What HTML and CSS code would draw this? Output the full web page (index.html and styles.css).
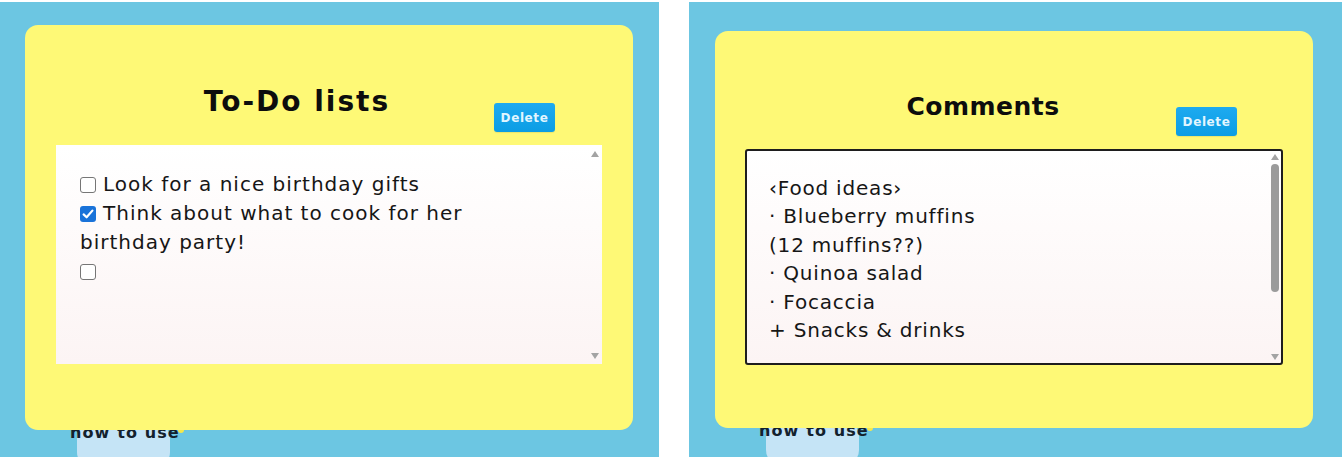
FILE: index.html
```html
<!DOCTYPE html>
<html lang="en">
<head>
<meta charset="utf-8">
<title>Notes</title>
<link rel="stylesheet" href="styles.css">
</head>
<body>
<div class="page">
  <section class="panel panel-left">
    <div class="card card-left">
      <div class="card-head">
        <h1 class="card-title">To-Do lists</h1>
        <button class="btn-delete" type="button">Delete</button>
      </div>
      <div class="note note-plain">
        <div class="note-body">
          <div class="todo"><span class="cb"></span><span class="todo-text">Look for a nice birthday gifts</span></div>
          <div class="todo"><span class="cb cb-on"><svg viewBox="0 0 16 16" width="16" height="16"><path d="M3.6 8.4 L6.6 11.3 L12.4 4.6" fill="none" stroke="#fff" stroke-width="2.2" stroke-linecap="round" stroke-linejoin="round"/></svg></span><span class="todo-text">Think about what to cook for her birthday party!</span></div>
          <div class="todo"><span class="cb"></span></div>
        </div>
        <div class="sbar">
          <span class="arr arr-up"></span>
          <span class="sbar-track"></span>
          <span class="arr arr-down"></span>
        </div>
      </div>
    </div>
    <div class="howto">
      <span class="howto-pill"></span>
      <span class="howto-text">how to use</span>
      <span class="howto-dot"></span>
    </div>
  </section>
  <section class="panel panel-right">
    <div class="card card-right">
      <div class="card-head">
        <h1 class="card-title">Comments</h1>
        <button class="btn-delete" type="button">Delete</button>
      </div>
      <div class="note note-bordered">
        <div class="note-body">
          <div class="line">&lsaquo;Food ideas&rsaquo;</div>
          <div class="line">&middot; Blueberry muffins</div>
          <div class="line">(12 muffins??)</div>
          <div class="line">&middot; Quinoa salad</div>
          <div class="line">&middot; Focaccia</div>
          <div class="line">+ Snacks &amp; drinks</div>
        </div>
        <div class="sbar">
          <span class="arr arr-up"></span>
          <span class="sbar-track"><span class="sbar-thumb"></span></span>
          <span class="arr arr-down"></span>
        </div>
      </div>
    </div>
    <div class="howto">
      <span class="howto-pill"></span>
      <span class="howto-text">how to use</span>
      <span class="howto-dot"></span>
    </div>
  </section>
</div>
</body>
</html>
```
FILE: styles.css
```css
* { box-sizing: border-box; }

html, body {
  margin: 0;
  padding: 0;
  background: #ffffff;
  height: 457px;
  overflow: hidden;
}

body {
  font-family: "Comic Sans MS", "DejaVu Sans", sans-serif;
  color: #111;
}

.page {
  display: flex;
  gap: 30px;
  padding-top: 2px;
  height: 457px;
}

.panel {
  background: #6cc6e2;
  height: 455px;
  overflow: hidden;
  display: flex;
  flex-direction: column;
}

.panel-left {
  width: 659px;
  padding: 23px 26px 0 25px;
}

.panel-right {
  width: 653px;
  padding: 29px 29px 0 26px;
}

.card {
  position: relative;
  z-index: 2;
  background: #fef976;
  border-radius: 13px;
  display: flex;
  flex-direction: column;
  flex: none;
}

.card-left { height: 405px; padding: 0 31px; }
.card-right { height: 397px; padding: 0 30px; }

.card-head {
  display: flex;
  align-items: flex-start;
}

.card-title {
  margin: 0;
  line-height: 36px;
  font-weight: bold;
  text-align: center;
  color: #0d0d0d;
}

.card-left .card-head { padding-top: 59px; margin-bottom: 13px; }
.card-left .card-title { width: 380px; margin-left: 51px; font-size: 28px; letter-spacing: 2px; }
.card-left .btn-delete { margin-left: 7px; margin-top: 19px; }

.card-right .card-head { padding-top: 58px; margin-bottom: 13px; }
.card-right .card-title { width: 380px; margin-left: 48px; font-size: 25px; letter-spacing: 0.5px; }
.card-right .btn-delete { margin-left: 3px; margin-top: 18px; }

.btn-delete {
  width: 61px;
  height: 29px;
  padding: 0;
  border: none;
  border-radius: 3px;
  background: linear-gradient(#1eaaf0, #0b9de4);
  color: #e2f6ff;
  font-family: "Comic Sans MS", "DejaVu Sans", sans-serif;
  font-size: 12px;
  font-weight: bold;
  letter-spacing: 0.6px;
  box-shadow: 0 1px 1px rgba(0,0,0,0.08);
}

.note {
  display: flex;
  background: linear-gradient(#ffffff, #fcf4f4);
}

.note-plain { height: 219px; }

.note-bordered {
  height: 216px;
  border: 2px solid #1e1e1e;
  border-radius: 3px;
}

.note-body {
  flex: 1;
  font-size: 20px;
  letter-spacing: 1px;
  color: #161616;
}

.note-plain .note-body {
  padding: 25px 68px 0 24px;
  line-height: 29px;
}

.note-bordered .note-body {
  padding: 23px 20px 0 22px;
  line-height: 28.4px;
  letter-spacing: 0.8px;
}

.todo .cb {
  display: inline-block;
  width: 16px;
  height: 16px;
  border: 1.5px solid #767676;
  border-radius: 3px;
  background: #fff;
  vertical-align: -2px;
  margin-right: 7px;
}

.todo .cb-on {
  border: none;
  background: #1a73d9;
}

.todo .cb-on svg { display: block; }

.sbar {
  width: 14px;
  display: flex;
  flex-direction: column;
  align-items: center;
  padding: 6px 0 5px;
}

.note-bordered .sbar { width: 13px; padding: 3px 0 3px; }

.arr {
  width: 0;
  height: 0;
  border-left: 4px solid transparent;
  border-right: 4px solid transparent;
  flex: none;
}

.arr-up { border-bottom: 6px solid #a3a3a3; }
.arr-down { border-top: 6px solid #a3a3a3; }

.sbar-track {
  flex: 1;
  width: 100%;
  display: flex;
  justify-content: center;
  padding-top: 4px;
}

.sbar-thumb {
  width: 8px;
  height: 128px;
  border-radius: 4px;
  background: #9b9b9b;
}

.howto {
  position: relative;
  z-index: 1;
  margin-top: -7px;
  height: 60px;
  flex: none;
}

.panel-left .howto { margin-left: 45px; }
.panel-right .howto { margin-left: 44px; margin-top: -7px; }

.howto-pill {
  position: absolute;
  left: 7px;
  top: 0;
  width: 93px;
  height: 44px;
  border-radius: 15px;
  background: #c5e4f6;
}

.howto-text {
  position: relative;
  display: inline-block;
  font-family: "DejaVu Sans", sans-serif;
  font-size: 16px;
  font-weight: bold;
  letter-spacing: 1.1px;
  line-height: 20px;
  color: #13212d;
}

.howto-dot {
  position: absolute;
  left: 108px;
  top: 4px;
  width: 6px;
  height: 6px;
  border-radius: 50%;
  background: #f5e84a;
}
```
